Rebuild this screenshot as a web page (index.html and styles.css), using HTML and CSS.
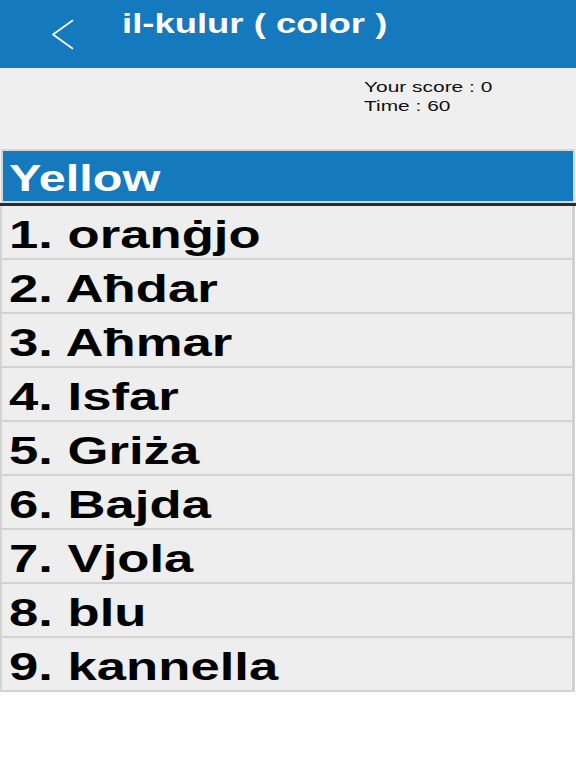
FILE: index.html
```html
<!DOCTYPE html>
<html lang="mt">
<head>
<meta charset="utf-8">
<title>il-kulur ( color )</title>
<link rel="stylesheet" href="styles.css">
</head>
<body>
<header class="topbar">
  <svg class="back" width="24" height="31" viewBox="0 0 24 31" aria-hidden="true">
    <polyline points="21.5,1.5 2,15.5 21.5,29.5" fill="none" stroke="#ffffff" stroke-width="1.6" stroke-linecap="round" stroke-linejoin="round"/>
  </svg>
  <h1 class="title"><span class="wide">il-kulur ( color )</span></h1>
</header>
<section class="info">
  <div class="stats">
    <div class="stat"><span class="wide">Your score : 0</span></div>
    <div class="stat"><span class="wide">Time : 60</span></div>
  </div>
</section>
<div class="question">
  <div class="banner"><span class="wide">Yellow</span></div>
</div>
<ul class="answers">
  <li class="row"><span class="wide">1. oranġjo</span></li>
  <li class="row"><span class="wide">2. Aħdar</span></li>
  <li class="row"><span class="wide">3. Aħmar</span></li>
  <li class="row"><span class="wide">4. Isfar</span></li>
  <li class="row"><span class="wide">5. Griża</span></li>
  <li class="row"><span class="wide">6. Bajda</span></li>
  <li class="row"><span class="wide">7. Vjola</span></li>
  <li class="row"><span class="wide">8. blu</span></li>
  <li class="row"><span class="wide">9. kannella</span></li>
</ul>
</body>
</html>
```
FILE: styles.css
```css
html, body {
  margin: 0;
  padding: 0;
  background: #ffffff;
  font-family: "Liberation Sans", Arial, Helvetica, sans-serif;
}

.wide {
  display: inline-block;
  white-space: nowrap;
  transform: scaleX(1.35);
  transform-origin: left center;
}

.topbar {
  height: 68px;
  background: #1579be;
  display: flex;
  align-items: flex-start;
}

.back {
  display: block;
  margin: 19px 0 0 51px;
  flex: none;
}

.title {
  margin: 9px 0 0 47px;
  font-size: 27px;
  line-height: 30px;
  font-weight: bold;
  color: #ffffff;
}

.info {
  height: 81px;
  background: #efefef;
  box-sizing: border-box;
  padding: 9px 0 0 364px;
}

.stat {
  font-size: 15.5px;
  line-height: 19px;
  color: #111111;
}

.question {
  background: #efefef;
  padding: 0 1px;
}

.banner {
  height: 54px;
  box-sizing: border-box;
  border: 2px solid #d6d8da;
  background: #1579be;
  padding: 8px 0 0 6px;
  font-size: 36px;
  line-height: 40px;
  font-weight: bold;
  color: #ffffff;
}

.answers {
  list-style: none;
  margin: 0;
  padding: 0;
  border-top: 3px solid #2c2c2c;
}

.row {
  height: 54px;
  box-sizing: border-box;
  background: #eeeeee;
  border-left: 2px solid #d4d4d4;
  border-right: 3px solid #d0d0d0;
  border-bottom: 2px solid #d3d3d3;
  margin-right: 1px;
  padding: 5px 0 0 7px;
  font-size: 39px;
  line-height: 47px;
  font-weight: bold;
  color: #000000;
}
```
